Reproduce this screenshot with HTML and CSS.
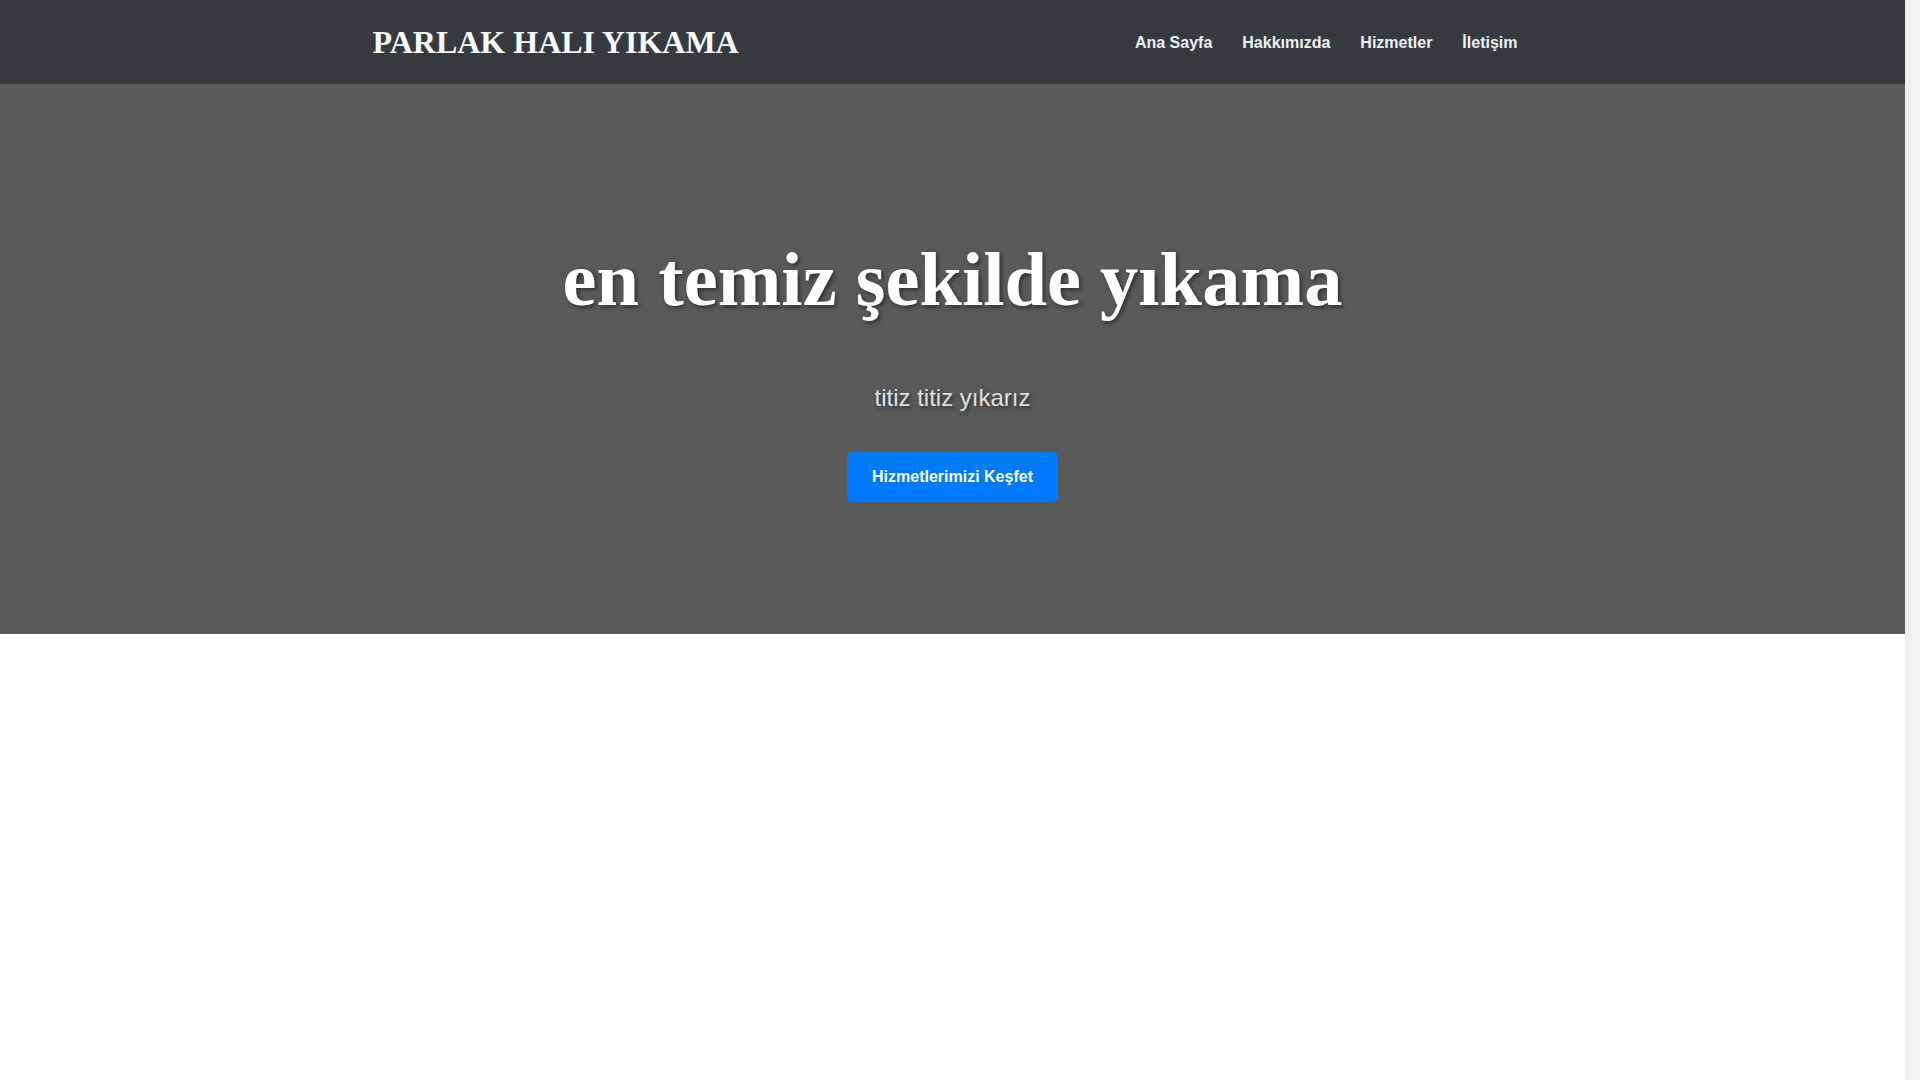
FILE: index.html
```html
<!DOCTYPE html>
<html lang="tr">
<head>
<meta charset="utf-8">
<title>Parlak Halı Yıkama</title>
<link rel="stylesheet" href="styles.css">
</head>
<body>
<header class="site-header">
  <div class="container header-inner">
    <div class="logo">PARLAK HALI YIKAMA</div>
    <nav class="main-nav">
      <a href="#" class="nav-link">Ana Sayfa</a>
      <a href="#" class="nav-link">Hakkımızda</a>
      <a href="#" class="nav-link">Hizmetler</a>
      <a href="#" class="nav-link">İletişim</a>
    </nav>
  </div>
</header>
<section class="hero">
  <h1 class="hero-title">en temiz şekilde yıkama</h1>
  <p class="hero-sub">titiz titiz yıkarız</p>
  <a href="#" class="btn-primary">Hizmetlerimizi Keşfet</a>
</section>
<section class="content"></section>
</body>
</html>
```

FILE: styles.css
```css
* {
  box-sizing: border-box;
}
html {
  margin: 0;
  padding: 0;
  background: #f1f1f1;
}
body {
  margin: 0 15px 0 0;
  padding: 0;
  font-family: "Liberation Sans", Arial, sans-serif;
  background: #ffffff;
  color: #333;
}
.container {
  max-width: 1200px;
  margin: 0 auto;
  padding: 0 20px;
}
.site-header {
  background: #343a40;
  height: 84px;
}
.header-inner {
  height: 84px;
  display: flex;
  align-items: center;
  justify-content: space-between;
}
.logo {
  font-family: "Liberation Serif", "Times New Roman", serif;
  font-weight: bold;
  font-size: 32px;
  color: #f8f9fa;
}
.main-nav {
  display: flex;
  padding-top: 2px;
}
.nav-link {
  font-family: "Liberation Sans", Arial, sans-serif;
  font-weight: bold;
  font-size: 16px;
  color: #eef0f2;
  text-decoration: none;
  padding: 0 15px;
}
.hero {
  background: #5a5a5a;
  height: 550px;
  padding: 152px 20px 0;
  text-align: center;
}
.hero-title {
  font-family: "Liberation Serif", "Times New Roman", serif;
  font-weight: bold;
  font-size: 76.5px;
  line-height: normal;
  color: #ffffff;
  margin: 0 0 60px;
  text-shadow: 2px 2px 4px rgba(0, 0, 0, 0.5);
}
.hero-sub {
  font-family: "Liberation Sans", Arial, sans-serif;
  font-size: 24px;
  line-height: normal;
  color: #e0e0e0;
  margin: 0 0 40px;
  text-shadow: 2px 2px 4px rgba(0, 0, 0, 0.5);
}
.btn-primary {
  display: inline-block;
  background: #007bff;
  color: #ffffff;
  font-family: "Liberation Sans", Arial, sans-serif;
  font-weight: bold;
  font-size: 16px;
  line-height: 20px;
  padding: 15px 25px;
  border-radius: 5px;
  text-decoration: none;
}
.content {
  height: 600px;
  background: #ffffff;
}
```
